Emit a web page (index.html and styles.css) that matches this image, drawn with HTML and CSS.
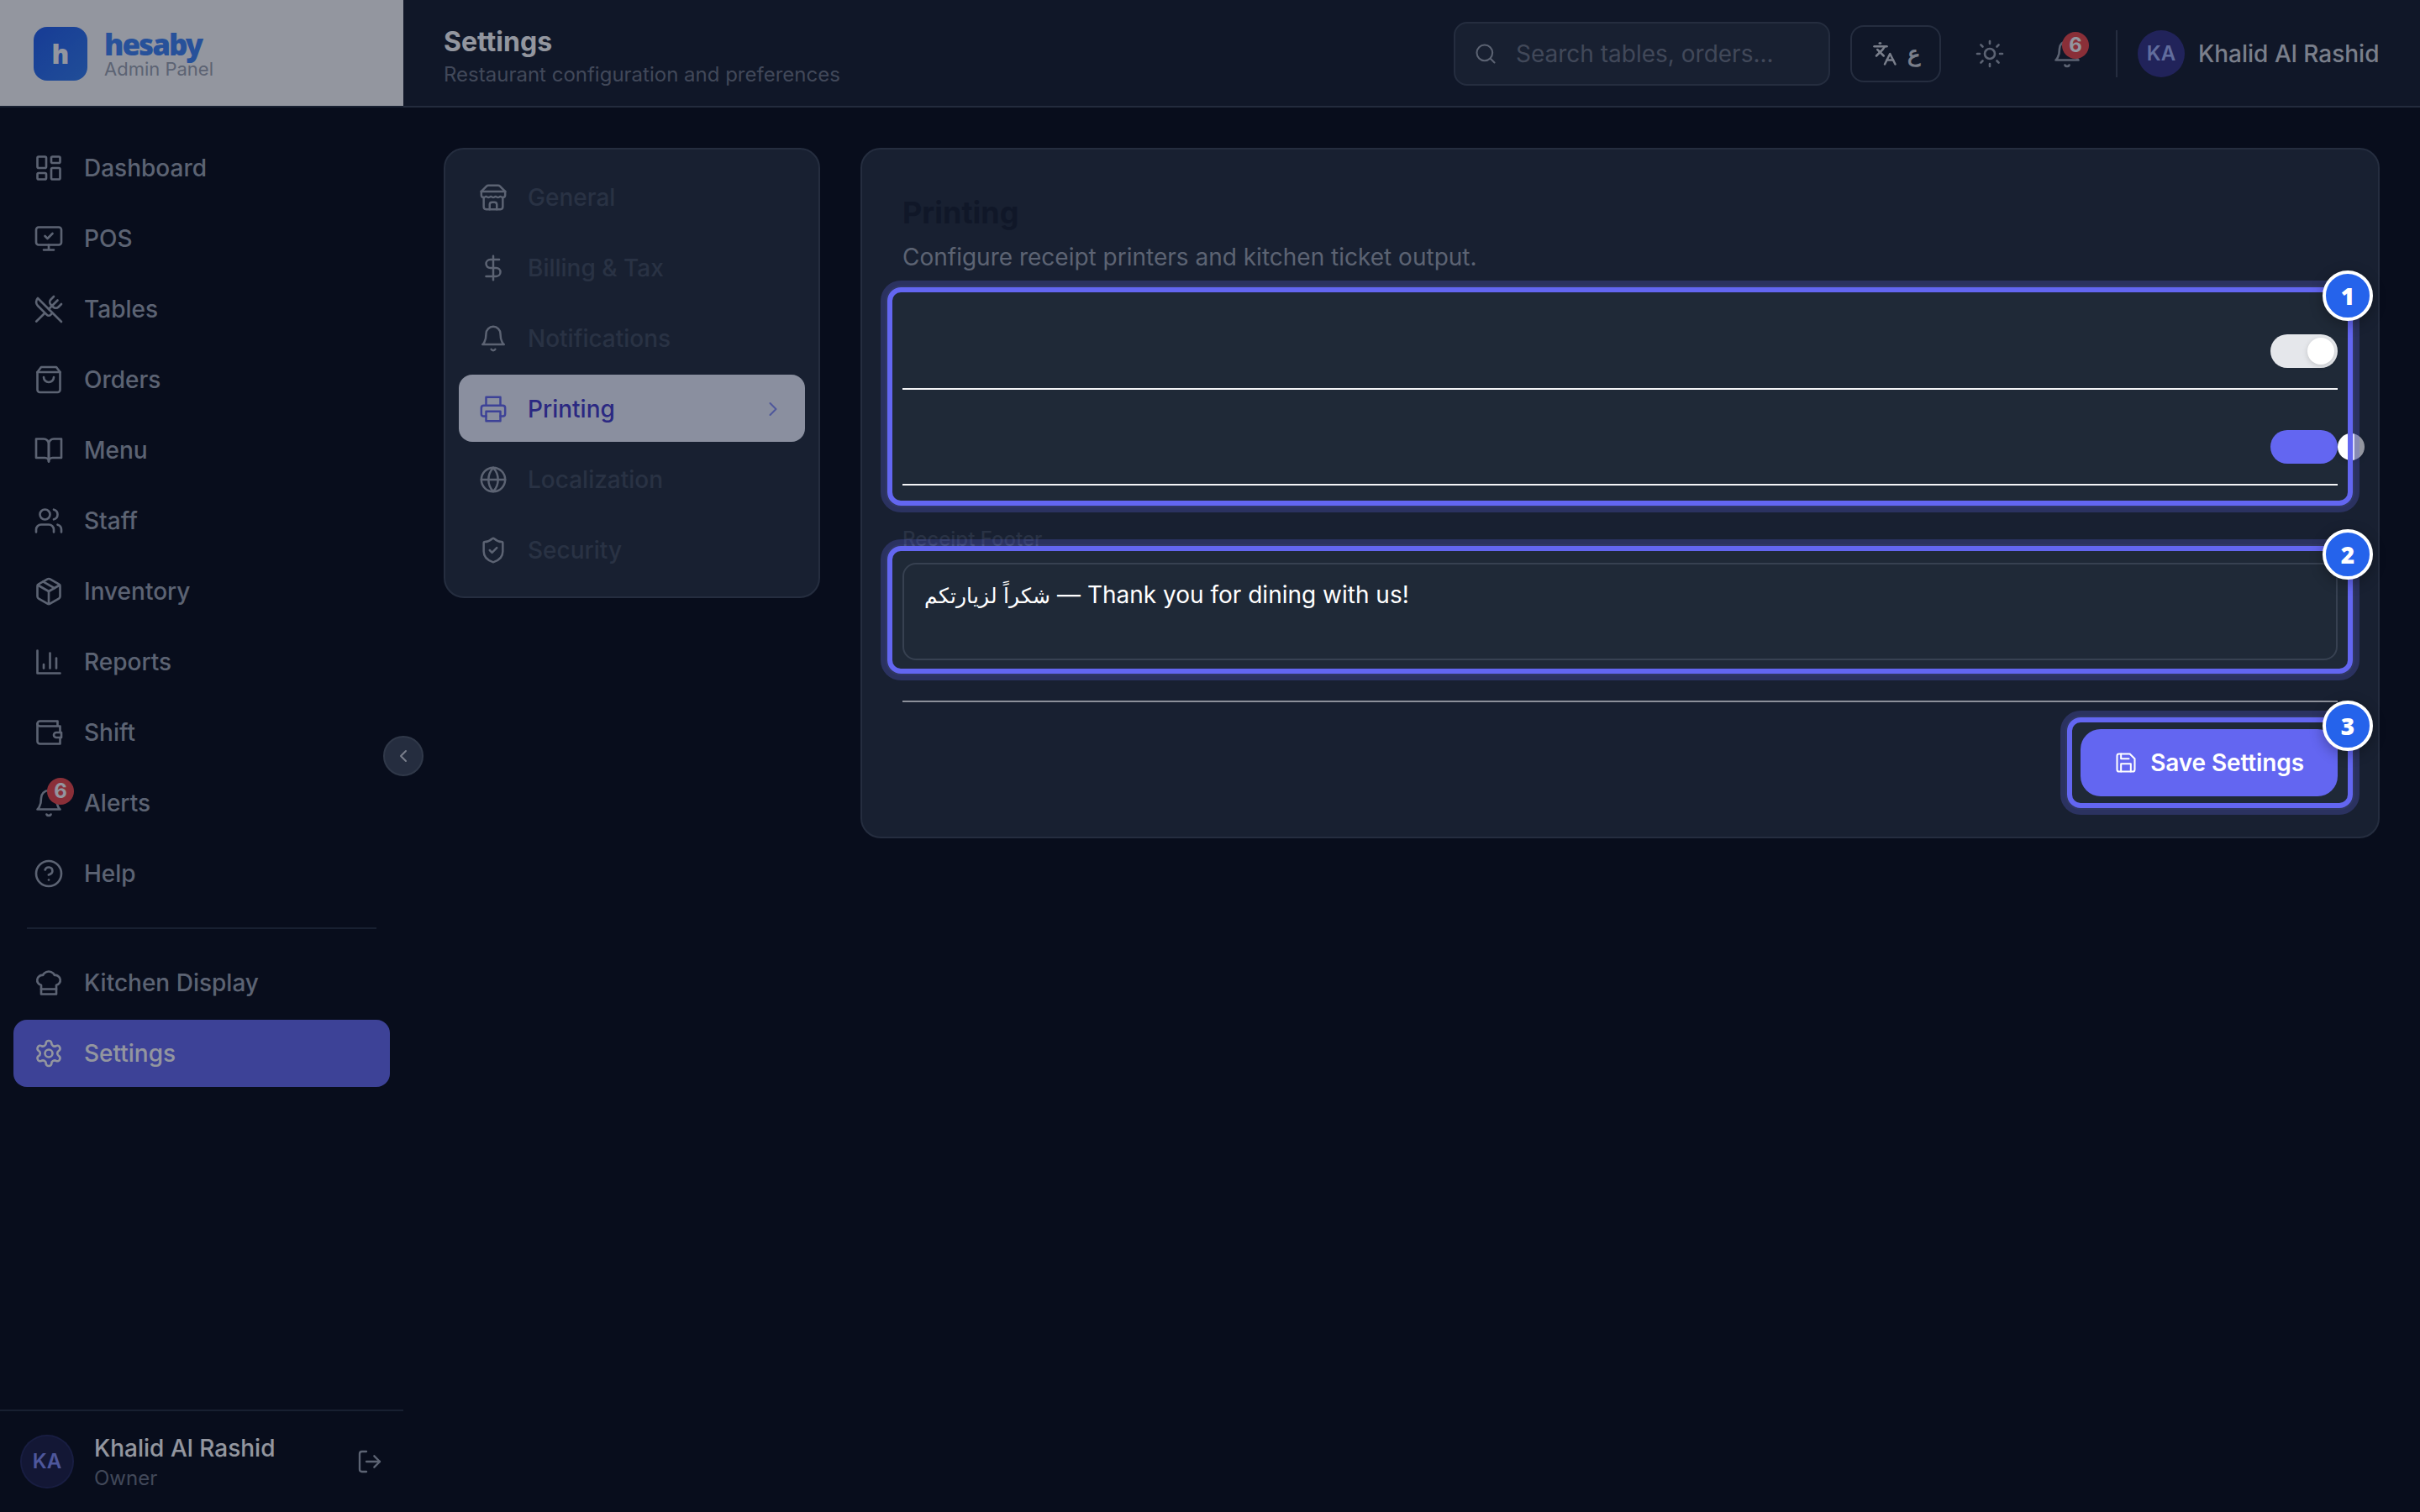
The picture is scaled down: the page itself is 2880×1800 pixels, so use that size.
FILE: index.html
```html
<!DOCTYPE html>
<html lang="en">
<head>
<meta charset="utf-8">
<title>Settings – hesaby</title>
<link rel="stylesheet" href="styles.css">
</head>
<body>
<div class="app">
  <aside class="sidebar">
    <div class="brand">
      <div class="brand-mark">h</div>
      <div class="brand-text">
        <div class="brand-name">hesaby</div>
        <div class="brand-sub">Admin Panel</div>
      </div>
    </div>
    <nav class="nav">
      <a class="nav-item"><svg class="icon" viewBox="0 0 24 24"><rect x="3" y="3" width="7" height="9" rx="1"/><rect x="14" y="3" width="7" height="5" rx="1"/><rect x="14" y="12" width="7" height="9" rx="1"/><rect x="3" y="16" width="7" height="5" rx="1"/></svg><span>Dashboard</span></a>
      <a class="nav-item"><svg class="icon" viewBox="0 0 24 24"><path d="m9 10 2 2 4-4"/><rect x="2" y="3" width="20" height="14" rx="2"/><path d="M12 17v4M8 21h8"/></svg><span>POS</span></a>
      <a class="nav-item"><svg class="icon" viewBox="0 0 24 24"><path d="m16 2-2.3 2.3a3 3 0 0 0 0 4.2l1.8 1.8a3 3 0 0 0 4.2 0L22 8"/><path d="M15 15 3.3 3.3a4.2 4.2 0 0 0 0 6l7.3 7.3c.7.7 2 .7 2.8 0L15 15Zm0 0 7 7"/><path d="m2.1 21.8 6.4-6.3"/><path d="m19 5-7 7"/></svg><span>Tables</span></a>
      <a class="nav-item"><svg class="icon" viewBox="0 0 24 24"><path d="M6 2 3 6v14a2 2 0 0 0 2 2h14a2 2 0 0 0 2-2V6l-3-4Z"/><path d="M3 6h18"/><path d="M16 10a4 4 0 0 1-8 0"/></svg><span>Orders</span></a>
      <a class="nav-item"><svg class="icon" viewBox="0 0 24 24"><path d="M2 3h6a4 4 0 0 1 4 4v14a3 3 0 0 0-3-3H2z"/><path d="M22 3h-6a4 4 0 0 0-4 4v14a3 3 0 0 1 3-3h7z"/></svg><span>Menu</span></a>
      <a class="nav-item"><svg class="icon" viewBox="0 0 24 24"><path d="M16 21v-2a4 4 0 0 0-4-4H6a4 4 0 0 0-4 4v2"/><circle cx="9" cy="7" r="4"/><path d="M22 21v-2a4 4 0 0 0-3-3.87"/><path d="M16 3.13a4 4 0 0 1 0 7.75"/></svg><span>Staff</span></a>
      <a class="nav-item"><svg class="icon" viewBox="0 0 24 24"><path d="m7.5 4.27 9 5.15"/><path d="M21 8a2 2 0 0 0-1-1.73l-7-4a2 2 0 0 0-2 0l-7 4A2 2 0 0 0 3 8v8a2 2 0 0 0 1 1.73l7 4a2 2 0 0 0 2 0l7-4A2 2 0 0 0 21 16Z"/><path d="m3.3 7 8.7 5 8.7-5"/><path d="M12 22V12"/></svg><span>Inventory</span></a>
      <a class="nav-item"><svg class="icon" viewBox="0 0 24 24"><path d="M3 3v18h18"/><path d="M18 17V9"/><path d="M13 17V5"/><path d="M8 17v-3"/></svg><span>Reports</span></a>
      <a class="nav-item"><svg class="icon" viewBox="0 0 24 24"><path d="M21 12V7H5a2 2 0 0 1 0-4h14v4"/><path d="M3 5v14a2 2 0 0 0 2 2h16v-5"/><path d="M18 12a2 2 0 0 0 0 4h4v-4Z"/></svg><span>Shift</span></a>
      <a class="nav-item"><span class="icon-wrap"><svg class="icon" viewBox="0 0 24 24"><path d="M6 8a6 6 0 0 1 12 0c0 7 3 9 3 9H3s3-2 3-9"/><path d="M10.3 21a1.94 1.94 0 0 0 3.4 0"/></svg><span class="count">6</span></span><span>Alerts</span></a>
      <a class="nav-item"><svg class="icon" viewBox="0 0 24 24"><circle cx="12" cy="12" r="10"/><path d="M9.09 9a3 3 0 0 1 5.83 1c0 2-3 3-3 3"/><path d="M12 17h.01"/></svg><span>Help</span></a>
      <div class="nav-divider"></div>
      <a class="nav-item"><svg class="icon" viewBox="0 0 24 24"><path d="M6 13.87A4 4 0 0 1 7.41 6a5.11 5.11 0 0 1 1.05-1.54 5 5 0 0 1 7.08 0A5.11 5.11 0 0 1 16.59 6 4 4 0 0 1 18 13.87V21H6Z"/><path d="M6 17h12"/></svg><span>Kitchen Display</span></a>
      <a class="nav-item active"><svg class="icon" viewBox="0 0 24 24"><path d="M12.22 2h-.44a2 2 0 0 0-2 2v.18a2 2 0 0 1-1 1.73l-.43.25a2 2 0 0 1-2 0l-.15-.08a2 2 0 0 0-2.73.73l-.22.38a2 2 0 0 0 .73 2.73l.15.1a2 2 0 0 1 1 1.72v.51a2 2 0 0 1-1 1.74l-.15.09a2 2 0 0 0-.73 2.73l.22.38a2 2 0 0 0 2.73.73l.15-.08a2 2 0 0 1 2 0l.43.25a2 2 0 0 1 1 1.73V20a2 2 0 0 0 2 2h.44a2 2 0 0 0 2-2v-.18a2 2 0 0 1 1-1.73l.43-.25a2 2 0 0 1 2 0l.15.08a2 2 0 0 0 2.73-.73l.22-.39a2 2 0 0 0-.73-2.73l-.15-.08a2 2 0 0 1-1-1.74v-.5a2 2 0 0 1 1-1.74l.15-.09a2 2 0 0 0 .73-2.73l-.22-.38a2 2 0 0 0-2.73-.73l-.15.08a2 2 0 0 1-2 0l-.43-.25a2 2 0 0 1-1-1.73V4a2 2 0 0 0-2-2z"/><circle cx="12" cy="12" r="3"/></svg><span>Settings</span></a>
    </nav>
    <div class="account">
      <div class="avatar avatar-outline">KA</div>
      <div class="account-text">
        <div class="account-name">Khalid Al Rashid</div>
        <div class="account-role">Owner</div>
      </div>
      <svg class="icon icon-logout" viewBox="0 0 24 24"><path d="M9 21H5a2 2 0 0 1-2-2V5a2 2 0 0 1 2-2h4"/><path d="m16 17 5-5-5-5"/><path d="M21 12H9"/></svg>
    </div>
    <div class="collapse"><svg class="icon" viewBox="0 0 24 24"><path d="m15 18-6-6 6-6"/></svg></div>
  </aside>

  <div class="content">
    <header class="topbar">
      <div class="page-title">
        <h1>Settings</h1>
        <p>Restaurant configuration and preferences</p>
      </div>
      <div class="search"><svg class="icon" viewBox="0 0 24 24"><circle cx="11" cy="11" r="8"/><path d="m21 21-4.3-4.3"/></svg><span>Search tables, orders...</span></div>
      <div class="lang"><svg class="icon" viewBox="0 0 24 24"><path d="m5 8 6 6"/><path d="m4 14 6-6 2-3"/><path d="M2 5h12"/><path d="M7 2h1"/><path d="m22 22-5-10-5 10"/><path d="M14 18h6"/></svg><span>ع</span></div>
      <svg class="icon icon-sun" viewBox="0 0 24 24"><circle cx="12" cy="12" r="4"/><path d="M12 2v2M12 20v2M4.93 4.93l1.41 1.41M17.66 17.66l1.41 1.41M2 12h2M20 12h2M6.34 17.66l-1.41 1.41M19.07 4.93l-1.41 1.41"/></svg>
      <span class="icon-wrap bell"><svg class="icon" viewBox="0 0 24 24"><path d="M6 8a6 6 0 0 1 12 0c0 7 3 9 3 9H3s3-2 3-9"/><path d="M10.3 21a1.94 1.94 0 0 0 3.4 0"/></svg><span class="count">6</span></span>
      <div class="user">
        <div class="avatar">KA</div>
        <span class="user-name">Khalid Al Rashid</span>
      </div>
    </header>

    <main class="main">
      <nav class="panel tabs">
        <a class="tab"><svg class="icon" viewBox="0 0 24 24"><path d="m2 7 4.41-4.41A2 2 0 0 1 7.83 2h8.34a2 2 0 0 1 1.42.59L22 7"/><path d="M4 12v8a2 2 0 0 0 2 2h12a2 2 0 0 0 2-2v-8"/><path d="M15 22v-4a2 2 0 0 0-2-2h-2a2 2 0 0 0-2 2v4"/><path d="M2 7h20"/><path d="M22 7v3a2 2 0 0 1-2 2a2.7 2.7 0 0 1-1.59-.63.7.7 0 0 0-.82 0A2.7 2.7 0 0 1 16 12a2.7 2.7 0 0 1-1.59-.63.7.7 0 0 0-.82 0A2.7 2.7 0 0 1 12 12a2.7 2.7 0 0 1-1.59-.63.7.7 0 0 0-.82 0A2.7 2.7 0 0 1 8 12a2.7 2.7 0 0 1-1.59-.63.7.7 0 0 0-.82 0A2.7 2.7 0 0 1 4 12a2 2 0 0 1-2-2V7"/></svg><span>General</span></a>
        <a class="tab"><svg class="icon" viewBox="0 0 24 24"><path d="M12 2v20"/><path d="M17 5H9.5a3.5 3.5 0 0 0 0 7h5a3.5 3.5 0 0 1 0 7H6"/></svg><span>Billing &amp; Tax</span></a>
        <a class="tab"><svg class="icon" viewBox="0 0 24 24"><path d="M6 8a6 6 0 0 1 12 0c0 7 3 9 3 9H3s3-2 3-9"/><path d="M10.3 21a1.94 1.94 0 0 0 3.4 0"/></svg><span>Notifications</span></a>
        <a class="tab selected"><svg class="icon" viewBox="0 0 24 24"><path d="M6 9V2h12v7"/><path d="M6 18H4a2 2 0 0 1-2-2v-5a2 2 0 0 1 2-2h16a2 2 0 0 1 2 2v5a2 2 0 0 1-2 2h-2"/><rect x="6" y="14" width="12" height="8"/></svg><span>Printing</span><svg class="icon chevron" viewBox="0 0 24 24"><path d="m9 18 6-6-6-6"/></svg></a>
        <a class="tab"><svg class="icon" viewBox="0 0 24 24"><circle cx="12" cy="12" r="10"/><path d="M12 2a14.5 14.5 0 0 0 0 20 14.5 14.5 0 0 0 0-20"/><path d="M2 12h20"/></svg><span>Localization</span></a>
        <a class="tab"><svg class="icon" viewBox="0 0 24 24"><path d="M20 13c0 5-3.5 7.5-7.66 8.95a1 1 0 0 1-.67-.01C7.5 20.5 4 18 4 13V6a1 1 0 0 1 1-1c2 0 4.5-1.2 6.24-2.72a1.17 1.17 0 0 1 1.52 0C14.51 3.81 17 5 19 5a1 1 0 0 1 1 1z"/><path d="m9 12 2 2 4-4"/></svg><span>Security</span></a>
      </nav>

      <section class="panel form">
        <h2>Printing</h2>
        <p class="lead">Configure receipt printers and kitchen ticket output.</p>
        <div class="setting"><div class="toggle"><div class="knob"></div></div></div>
        <div class="setting"><div class="toggle on"><div class="knob"></div></div></div>
        <div class="label">Receipt Footer</div>
        <div class="textarea"><span class="arabic">شكراً لزيارتكم</span> — Thank you for dining with us!</div>
        <div class="actions">
          <div class="save"><svg class="icon" viewBox="0 0 24 24"><path d="M19 21H5a2 2 0 0 1-2-2V5a2 2 0 0 1 2-2h11l5 5v11a2 2 0 0 1-2 2z"/><path d="M17 21v-8H7v8"/><path d="M7 3v5h8"/></svg><span>Save Settings</span></div>
        </div>
      </section>
    </main>
  </div>
</div>

<!-- Guided tour: dimmed backdrop with cut-outs and numbered rings -->
<svg class="backdrop" viewBox="0 0 2880 1800">
  <mask id="holes">
    <rect width="2880" height="1800" fill="#fff"/>
    <rect x="1054" y="340" width="1748" height="264" rx="18"/>
    <rect x="1054" y="648" width="1748" height="156" rx="18"/>
    <rect x="2458" y="852" width="344" height="112" rx="18"/>
  </mask>
  <rect width="2880" height="1800" fill="#0f172a" fill-opacity=".45" mask="url(#holes)"/>
</svg>
<div class="ring ring-1"><span class="step">1</span></div>
<div class="ring ring-2"><span class="step">2</span></div>
<div class="ring ring-3"><span class="step">3</span></div>
</body>
</html>
```
FILE: styles.css
```css
* { box-sizing: border-box; }

body {
  margin: 0;
  width: 2880px;
  height: 1800px;
  overflow: hidden;
  position: relative;
  background: #030712;
  color: #9ca3af;
  font-family: Inter, "Noto Sans", sans-serif;
  font-size: 28px;
  line-height: 40px;
}

h1, h2, p { margin: 0; }

.icon {
  display: block;
  flex: none;
  width: 36px;
  height: 36px;
  fill: none;
  stroke: currentColor;
  stroke-width: 1.75;
  stroke-linecap: round;
  stroke-linejoin: round;
}

.app { display: flex; height: 1800px; }

/* Sidebar */
.sidebar {
  position: relative;
  display: flex;
  flex-direction: column;
  flex: none;
  width: 480px;
}

.brand {
  display: flex;
  align-items: center;
  gap: 20px;
  height: 128px;
  padding: 0 40px;
  background: #fff;
  border-bottom: 2px solid #1f2937;
}
.brand-mark {
  width: 64px;
  height: 64px;
  margin-top: 2px;
  border-radius: 16px;
  background: linear-gradient(135deg, #1d5bee, #2f7cf2);
  color: #fff;
  font: 900 31px/64px "Noto Sans", sans-serif;
  text-align: center;
}
.brand-text { padding-top: 2px; }
.brand-name {
  font: 900 35px/36px "Noto Sans", sans-serif;
  letter-spacing: -2px;
  color: #3b82f6;
}
.brand-sub { font-size: 22px; line-height: 22px; }

.nav {
  display: flex;
  flex-direction: column;
  flex: 1;
  gap: 4px;
  padding: 32px 16px;
}
.nav-item {
  display: flex;
  align-items: center;
  gap: 24px;
  height: 80px;
  padding: 0 24px;
  border-radius: 16px;
  font-weight: 500;
}
.nav-item.active { background: #6366f1; color: #fff; font-weight: 550; }
.nav-divider { height: 2px; margin: 20px 16px; background: #1f2937; }

.icon-wrap { position: relative; flex: none; }
.count {
  position: absolute;
  top: -12px;
  right: -12px;
  width: 32px;
  height: 32px;
  border-radius: 50%;
  background: #ef4444;
  color: #fff;
  font-size: 24px;
  font-weight: 700;
  line-height: 32px;
  text-align: center;
}

.account {
  display: flex;
  align-items: center;
  gap: 24px;
  height: 122px;
  padding: 0 24px;
  border-top: 2px solid #1f2937;
}
.avatar {
  flex: none;
  width: 56px;
  height: 56px;
  border-radius: 50%;
  background: #312e81;
  color: #a5b4fc;
  font-size: 24px;
  font-weight: 600;
  line-height: 56px;
  text-align: center;
}
.avatar-outline {
  width: 64px;
  height: 64px;
  border: 2px solid rgba(99, 102, 241, .3);
  background: rgba(99, 102, 241, .2);
  background-clip: padding-box;
  color: #818cf8;
  line-height: 60px;
}
.account-text { flex: 1; }
.account-name { color: #fff; font-weight: 500; line-height: 36px; }
.account-role { font-size: 24px; line-height: 32px; padding-top: 2px; margin-bottom: -2px; color: #6b7280; }
.icon-logout { width: 32px; height: 32px; }

.collapse {
  position: absolute;
  top: 876px;
  right: -24px;
  display: grid;
  place-items: center;
  width: 48px;
  height: 48px;
  border: 2px solid #4b5563;
  border-radius: 50%;
  background: #374151;
  color: #d1d5db;
}
.collapse .icon { width: 24px; height: 24px; stroke-width: 2; }

/* Top bar */
.content { flex: 1; min-width: 0; }
.topbar {
  display: flex;
  align-items: center;
  height: 128px;
  padding: 2px 48px 0;
  background: #111827;
  border-bottom: 2px solid #343c4d;
}
.page-title { flex: 1; padding-top: 6px; }
.page-title h1 { color: #fff; font-size: 32px; font-weight: 700; line-height: 40px; }
.page-title p { font-size: 24px; line-height: 32px; color: #6b7280; padding-top: 3px; }

.search {
  display: flex;
  align-items: center;
  gap: 22px;
  width: 448px;
  height: 76px;
  padding: 0 22px;
  border: 2px solid #374151;
  border-radius: 16px;
  background: #1f2937;
  color: #6b7280;
}
.search .icon { width: 28px; height: 28px; color: #9ca3af; }

.lang {
  display: flex;
  align-items: center;
  gap: 12px;
  width: 108px;
  height: 68px;
  margin-left: 24px;
  padding: 0 24px;
  border: 2px solid #374151;
  border-radius: 16px;
  color: #d1d5db;
  font-size: 26px;
  font-weight: 600;
}
.lang .icon { width: 30px; height: 30px; stroke-width: 2; }
.icon-sun { margin-left: 40px; }
.bell { margin-left: 56px; }
.bell .count { top: -8px; right: -8px; }

.user {
  display: flex;
  align-items: center;
  gap: 16px;
  height: 56px;
  margin-left: 40px;
  padding-left: 24px;
  border-left: 2px solid #374151;
  color: #d1d5db;
  font-weight: 500;
}
.user-name { width: 216px; white-space: nowrap; }

/* Settings page */
.main {
  display: grid;
  grid-template-columns: 448px 1fr;
  align-items: start;
  gap: 48px;
  padding: 48px;
}
.panel {
  border: 2px solid #374151;
  border-radius: 24px;
  background: #1f2937;
}
.tabs { display: flex; flex-direction: column; gap: 4px; padding: 16px; }
.tab {
  display: flex;
  align-items: center;
  gap: 24px;
  height: 80px;
  padding: 1px 24px 0;
  border-radius: 16px;
  color: #3f4959;
  font-weight: 500;
}
.tab .icon { width: 34px; height: 34px; color: #9ca3af; }
.tab.selected { background: #eef2ff; color: #4338ca; }
.tab.selected .icon { color: #6366f1; }
.tab .icon.chevron { width: 28px; height: 28px; margin-left: auto; color: #818cf8; }

.form { padding: 48px; }
.form h2 { color: #111827; font-size: 36px; font-weight: 700; line-height: 54px; }
.lead { padding-top: 6px; line-height: 40px; margin-bottom: 24px; }
.setting {
  display: flex;
  justify-content: flex-end;
  align-items: flex-end;
  height: 114px;
  padding-bottom: 24px;
  border-bottom: 2px solid #f3f4f6;
}
.toggle {
  display: flex;
  width: 80px;
  height: 40px;
  padding: 4px 4px 4px 44px;
  border-radius: 20px;
  background: #e5e7eb;
}
.toggle.on { background: #6366f1; padding-left: 80px; padding-right: 0; }
.knob {
  flex: none;
  width: 32px;
  height: 32px;
  border-radius: 50%;
  background: #fff;
  box-shadow: 0 2px 6px rgba(0, 0, 0, .15);
}
.label {
  margin-top: 48px;
  color: #3f4959;
  font-size: 24px;
  font-weight: 500;
  line-height: 32px;
}
.textarea {
  height: 116px;
  margin-top: 12px;
  padding: 16px 24px;
  border: 2px solid #374151;
  border-radius: 16px;
  color: #fff;
}
.arabic { font-size: 25.4px; }
.actions {
  display: flex;
  justify-content: flex-end;
  margin-top: 48px;
  padding-top: 32px;
  border-top: 2px solid #f3f4f6;
}
.save {
  display: flex;
  align-items: center;
  justify-content: space-between;
  width: 306px;
  height: 80px;
  padding: 0 40px;
  border-radius: 24px;
  background: #6366f1;
  color: #fff;
  font-weight: 600;
  letter-spacing: -.12px;
  white-space: nowrap;
}
.save .icon { width: 28px; height: 28px; }

/* Tour overlay */
.backdrop { position: absolute; inset: 0; width: 2880px; height: 1800px; }
.ring {
  position: absolute;
  border: 6px solid #6366f1;
  border-radius: 16px;
  box-shadow: 0 0 0 8px rgba(99, 102, 241, .25);
}
.ring-1 { left: 1056px; top: 342px; width: 1744px; height: 260px; }
.ring-2 { left: 1056px; top: 650px; width: 1744px; height: 152px; }
.ring-3 { left: 2460px; top: 854px; width: 340px; height: 108px; }
.step {
  position: absolute;
  top: -26px;
  right: -30px;
  width: 60px;
  height: 60px;
  border: 4px solid #fff;
  border-radius: 50%;
  background: #2563eb;
  box-shadow: 0 4px 16px rgba(0, 0, 0, .3);
  color: #fff;
  font: 900 28px/52px "Noto Sans", sans-serif;
  text-align: center;
}
```
